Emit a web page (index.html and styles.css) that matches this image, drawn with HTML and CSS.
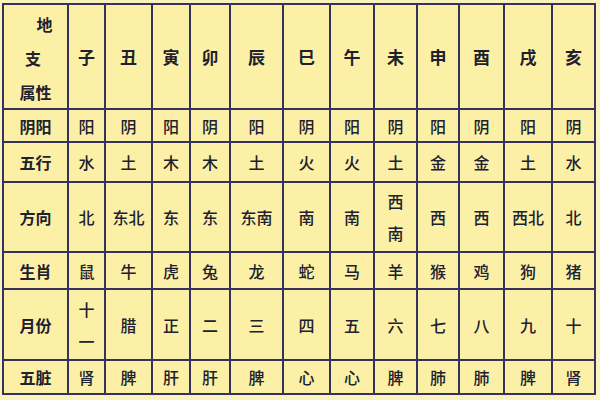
FILE: index.html
```html
<!DOCTYPE html>
<html lang="zh">
<head>
<meta charset="utf-8">
<link rel="stylesheet" href="styles.css">
</head>
<body>
<div class="table">
  <div class="cell corner"><span class="c1">地</span><span class="c2">支</span><span class="c3">属性</span></div>
  <div class="cell hd">子</div><div class="cell hd">丑</div><div class="cell hd">寅</div><div class="cell hd">卯</div><div class="cell hd">辰</div><div class="cell hd">巳</div><div class="cell hd">午</div><div class="cell hd">未</div><div class="cell hd">申</div><div class="cell hd">酉</div><div class="cell hd">戌</div><div class="cell hd">亥</div>

  <div class="cell lab">阴阳</div>
  <div class="cell">阳</div><div class="cell">阴</div><div class="cell">阳</div><div class="cell">阴</div><div class="cell">阳</div><div class="cell">阴</div><div class="cell">阳</div><div class="cell">阴</div><div class="cell">阳</div><div class="cell">阴</div><div class="cell">阳</div><div class="cell">阴</div>

  <div class="cell lab">五行</div>
  <div class="cell">水</div><div class="cell">土</div><div class="cell">木</div><div class="cell">木</div><div class="cell">土</div><div class="cell">火</div><div class="cell">火</div><div class="cell">土</div><div class="cell">金</div><div class="cell">金</div><div class="cell">土</div><div class="cell">水</div>

  <div class="cell lab">方向</div>
  <div class="cell">北</div><div class="cell">东北</div><div class="cell">东</div><div class="cell">东</div><div class="cell">东南</div><div class="cell">南</div><div class="cell">南</div><div class="cell stack">西<br>南</div><div class="cell">西</div><div class="cell">西</div><div class="cell">西北</div><div class="cell">北</div>

  <div class="cell lab">生肖</div>
  <div class="cell">鼠</div><div class="cell">牛</div><div class="cell">虎</div><div class="cell">兔</div><div class="cell">龙</div><div class="cell">蛇</div><div class="cell">马</div><div class="cell">羊</div><div class="cell">猴</div><div class="cell">鸡</div><div class="cell">狗</div><div class="cell">猪</div>

  <div class="cell lab">月份</div>
  <div class="cell stack">十<br>一</div><div class="cell">腊</div><div class="cell">正</div><div class="cell">二</div><div class="cell">三</div><div class="cell">四</div><div class="cell">五</div><div class="cell">六</div><div class="cell">七</div><div class="cell">八</div><div class="cell">九</div><div class="cell">十</div>

  <div class="cell lab">五脏</div>
  <div class="cell">肾</div><div class="cell">脾</div><div class="cell">肝</div><div class="cell">肝</div><div class="cell">脾</div><div class="cell">心</div><div class="cell">心</div><div class="cell">脾</div><div class="cell">肺</div><div class="cell">肺</div><div class="cell">脾</div><div class="cell">肾</div>
</div>
</body>
</html>
```

FILE: styles.css
```css
html {
  background: #fbf3bd;
}
body {
  margin: 3px 0 0 2px;
  font-family: "Noto Sans CJK SC", "Noto Sans", sans-serif;
  color: #20202e;
}
.table {
  display: grid;
  width: 594px;
  box-sizing: border-box;
  grid-template-columns: 65px 37px 47px 38px 40px 53px 47px 44px 43px 42px 45px 48px 43px;
  grid-template-rows: 105px 33px 40px 70px 37px 71px 34px;
  border-top: 2px solid #35335c;
  border-left: 2px solid #35335c;
  background: #fcf0a6;
}
.cell {
  box-sizing: border-box;
  border-right: 2px solid #35335c;
  border-bottom: 2px solid #35335c;
  display: flex;
  align-items: center;
  justify-content: center;
  text-align: center;
  font-size: 16px;
  font-weight: 500;
  line-height: 1;
}
.hd {
  font-weight: 700;
  font-size: 17px;
}
.lab {
  font-weight: 700;
}
.stack {
  line-height: 32px;
}
.corner {
  flex-direction: column;
  align-items: stretch;
  justify-content: flex-start;
  font-weight: 700;
  line-height: 34px;
  padding-top: 2px;
}
.c1 {
  padding-left: 18px;
}
.c2 {
  padding-right: 5px;
}
.c3 {
  padding-left: 0;
}
```
